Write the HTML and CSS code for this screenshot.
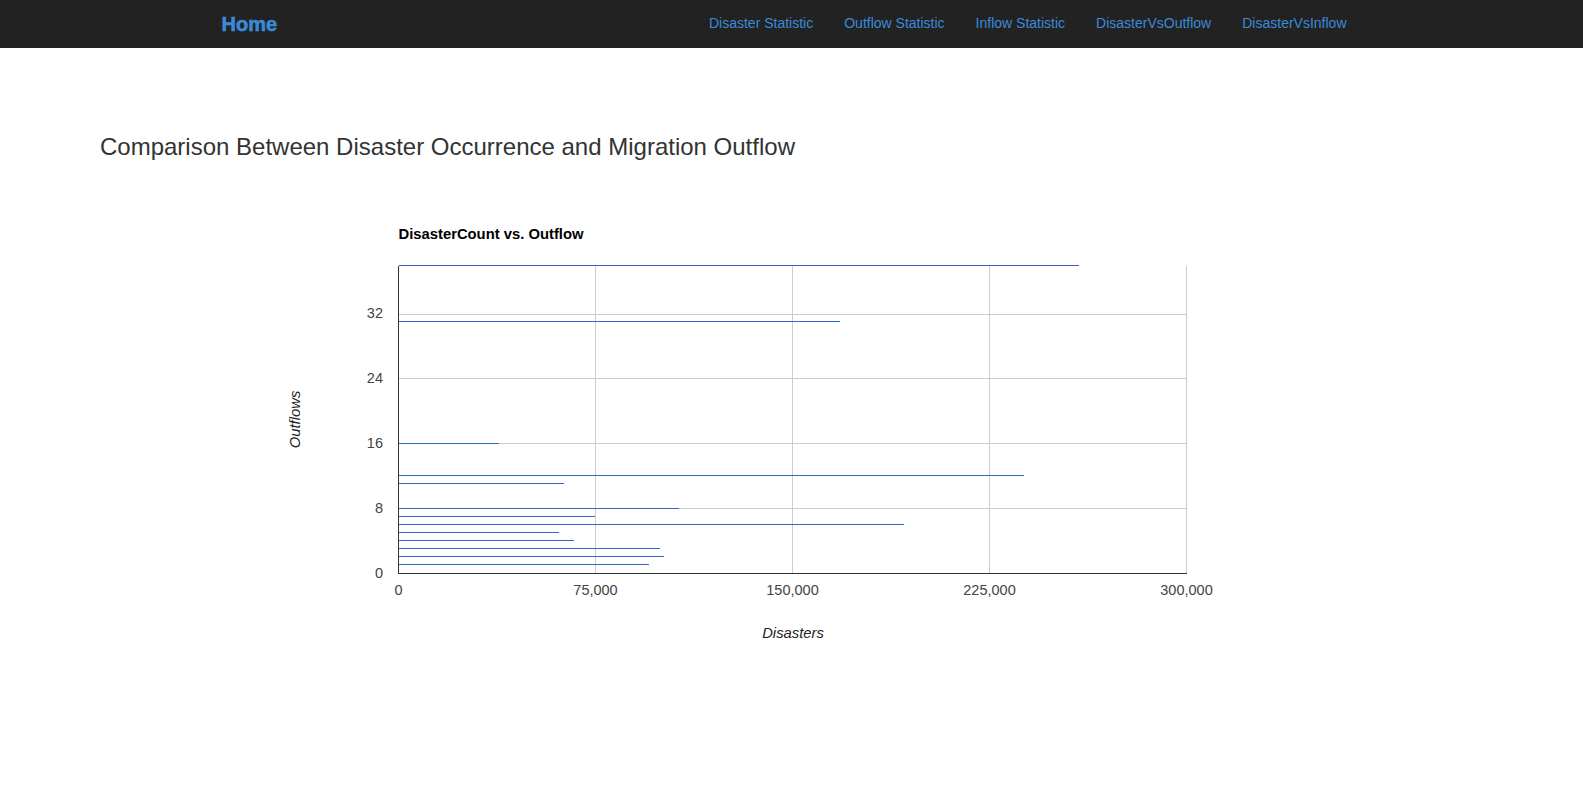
FILE: index.html
```html
<!DOCTYPE html>
<html lang="en">
<head>
<meta charset="utf-8">
<title>DisasterVsOutflow</title>
<link rel="stylesheet" href="styles.css">
</head>
<body>
<nav class="navbar">
  <div class="navbar-inner">
    <a class="brand" href="#">Home</a>
    <ul class="nav-links">
      <li><a href="#">Disaster Statistic</a></li>
      <li><a href="#">Outflow Statistic</a></li>
      <li><a href="#">Inflow Statistic</a></li>
      <li><a href="#">DisasterVsOutflow</a></li>
      <li><a href="#">DisasterVsInflow</a></li>
    </ul>
  </div>
</nav>
<main class="main">
  <h2 class="page-title">Comparison Between Disaster Occurrence and Migration Outflow</h2>
  <div class="chart">
    <svg class="chart-svg" width="1000" height="460" viewBox="0 0 1000 460" xmlns="http://www.w3.org/2000/svg">
      <text class="chart-title" x="148.5" y="39">DisasterCount vs. Outflow</text>
      <g class="grid" shape-rendering="crispEdges">
        <line x1="148.5" y1="308.5" x2="936.5" y2="308.5"/>
        <line x1="148.5" y1="243.5" x2="936.5" y2="243.5"/>
        <line x1="148.5" y1="178.5" x2="936.5" y2="178.5"/>
        <line x1="148.5" y1="114.5" x2="936.5" y2="114.5"/>
        <line x1="345.5" y1="65.5" x2="345.5" y2="373.5"/>
        <line x1="542.5" y1="65.5" x2="542.5" y2="373.5"/>
        <line x1="739.5" y1="65.5" x2="739.5" y2="373.5"/>
        <line x1="936.5" y1="65.5" x2="936.5" y2="373.5"/>
      </g>
      <g class="bars" shape-rendering="crispEdges">
        <line x1="148.5" y1="65.5" x2="829" y2="65.5"/>
        <line x1="148.5" y1="121.5" x2="590" y2="121.5"/>
        <line x1="148.5" y1="243.5" x2="249" y2="243.5"/>
        <line x1="148.5" y1="275.5" x2="774" y2="275.5"/>
        <line x1="148.5" y1="283.5" x2="314" y2="283.5"/>
        <line x1="148.5" y1="308.5" x2="429" y2="308.5"/>
        <line x1="148.5" y1="316.5" x2="345" y2="316.5"/>
        <line x1="148.5" y1="324.5" x2="654" y2="324.5"/>
        <line x1="148.5" y1="332.5" x2="309" y2="332.5"/>
        <line x1="148.5" y1="340.5" x2="324" y2="340.5"/>
        <line x1="148.5" y1="348.5" x2="410" y2="348.5"/>
        <line x1="148.5" y1="356.5" x2="414" y2="356.5"/>
        <line x1="148.5" y1="364.5" x2="399" y2="364.5"/>
      </g>
      <g class="axis" shape-rendering="crispEdges">
        <line x1="148.5" y1="65.5" x2="148.5" y2="373.5"/>
        <line x1="148" y1="373.5" x2="937" y2="373.5"/>
      </g>
      <g class="ticks-y">
        <text x="133" y="377.5">0</text>
        <text x="133" y="312.5">8</text>
        <text x="133" y="247.5">16</text>
        <text x="133" y="182.5">24</text>
        <text x="133" y="118">32</text>
      </g>
      <g class="ticks-x">
        <text x="148.5" y="395">0</text>
        <text x="345.5" y="395">75,000</text>
        <text x="542.5" y="395">150,000</text>
        <text x="739.5" y="395">225,000</text>
        <text x="936.5" y="395">300,000</text>
      </g>
      <text class="axis-title" x="543" y="438">Disasters</text>
      <text class="axis-title" x="0" y="0" transform="translate(50 219.5) rotate(-90)">Outflows</text>
    </svg>
  </div>
</main>
</body>
</html>
```
FILE: styles.css
```css
* {
  box-sizing: border-box;
}

html, body {
  margin: 0;
  padding: 0;
  background: #ffffff;
}

body {
  font-family: "Liberation Sans", Arial, Helvetica, sans-serif;
  font-size: 14px;
  color: #333333;
}

.navbar {
  background: #222222;
  height: 48px;
}

.navbar-inner {
  max-width: 1170px;
  margin: 0 auto;
  padding: 0 14.5px 0 0;
  height: 48px;
  display: flex;
  justify-content: space-between;
  align-items: flex-start;
}

.brand {
  display: block;
  padding: 14px 15px 14px 15px;
  font-size: 20px;
  line-height: 20px;
  font-weight: 700;
  color: #3b8ad8;
  text-decoration: none;
  -webkit-text-stroke: 0.6px #3b8ad8;
}

.nav-links {
  list-style: none;
  margin: 0;
  padding: 0;
  display: flex;
}

.nav-links a {
  display: block;
  padding: 13px 15.5px 15px 15.5px;
  font-size: 14px;
  line-height: 20px;
  color: #3b8ad8;
  text-decoration: none;
}

.main {
  padding: 85.5px 0 0 100px;
}

.page-title {
  margin: 0;
  font-size: 24px;
  line-height: 26px;
  font-weight: 400;
  color: #333333;
}

.chart {
  margin: 40.5px 0 0 150px;
}

.chart-svg {
  display: block;
  font-family: "Liberation Sans", Arial, sans-serif;
}

.chart-title {
  font-size: 14.8px;
  font-weight: 700;
  fill: #000000;
}

.grid line {
  stroke: #cccccc;
  stroke-width: 1;
}

.bars line {
  stroke: #3366cc;
  stroke-width: 1;
}

.axis line {
  stroke: #333333;
  stroke-width: 1;
}

.ticks-y text {
  font-size: 14.5px;
  fill: #444444;
  text-anchor: end;
}

.ticks-x text {
  font-size: 14.5px;
  fill: #444444;
  text-anchor: middle;
}

.axis-title {
  font-size: 14.8px;
  font-style: italic;
  fill: #222222;
  text-anchor: middle;
}
```
